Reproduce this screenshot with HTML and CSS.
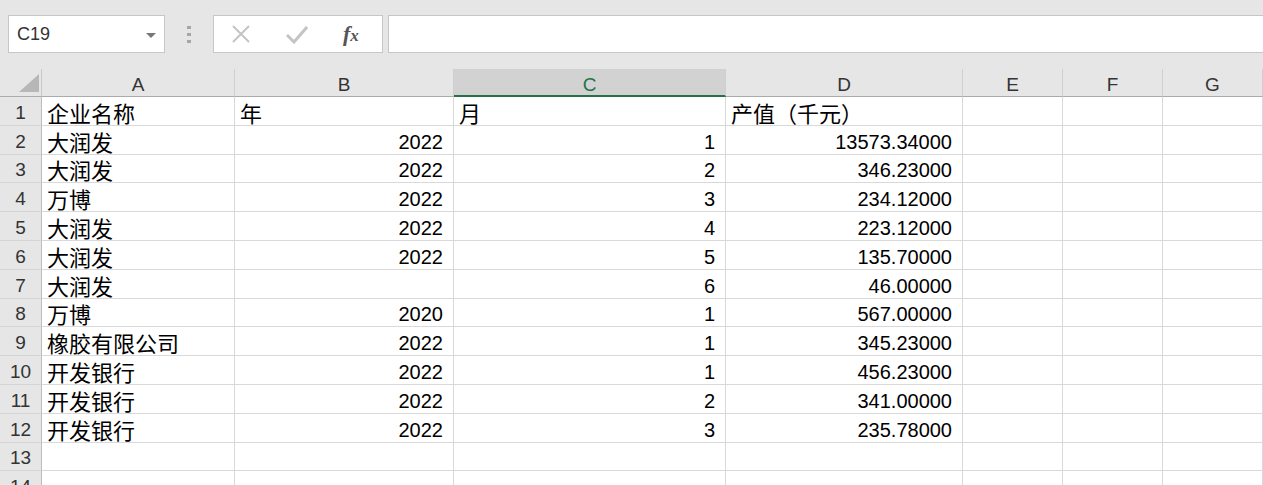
FILE: index.html
```html
<!DOCTYPE html>
<html lang="zh-CN">
<head>
  <meta charset="UTF-8" />
  <title>Sheet1</title>
  <link rel="stylesheet" href="styles.css">
</head>
<body>
  <!-- formula bar -->
  <div class="toolbar">
    <div class="name-box">
      <span>C19</span>
      <span class="caret"></span>
    </div>
    <div class="grip"><i></i><i></i><i></i></div>
    <div class="func-box">
      <svg class="icon" width="20" height="18" viewBox="0 0 20 18">
        <path d="M2 1 L18 17 M18 1 L2 17" stroke="#c4c4c4" stroke-width="2" fill="none"/>
      </svg>
      <svg class="icon" width="22" height="19" viewBox="0 0 22 19">
        <path d="M1 10 L8 17 L21 2" stroke="#c4c4c4" stroke-width="3" fill="none"/>
      </svg>
      <span class="fx">f<span>x</span></span>
    </div>
    <div class="formula-input"></div>
  </div>

  <!-- sheet grid -->
  <div class="sheet">
    <div class="corner"><span class="tri"></span></div>
    <div class="col-head">A</div>
    <div class="col-head">B</div>
    <div class="col-head active">C</div>
    <div class="col-head">D</div>
    <div class="col-head">E</div>
    <div class="col-head">F</div>
    <div class="col-head">G</div>

    <div class="row-head">1</div>
    <div class="cell txt">企业名称</div><div class="cell txt">年</div><div class="cell txt">月</div><div class="cell txt">产值（千元）</div><div class="cell"></div><div class="cell"></div><div class="cell"></div>

    <div class="row-head">2</div>
    <div class="cell txt">大润发</div><div class="cell num">2022</div><div class="cell num">1</div><div class="cell num">13573.34000</div><div class="cell"></div><div class="cell"></div><div class="cell"></div>

    <div class="row-head">3</div>
    <div class="cell txt">大润发</div><div class="cell num">2022</div><div class="cell num">2</div><div class="cell num">346.23000</div><div class="cell"></div><div class="cell"></div><div class="cell"></div>

    <div class="row-head">4</div>
    <div class="cell txt">万博</div><div class="cell num">2022</div><div class="cell num">3</div><div class="cell num">234.12000</div><div class="cell"></div><div class="cell"></div><div class="cell"></div>

    <div class="row-head">5</div>
    <div class="cell txt">大润发</div><div class="cell num">2022</div><div class="cell num">4</div><div class="cell num">223.12000</div><div class="cell"></div><div class="cell"></div><div class="cell"></div>

    <div class="row-head">6</div>
    <div class="cell txt">大润发</div><div class="cell num">2022</div><div class="cell num">5</div><div class="cell num">135.70000</div><div class="cell"></div><div class="cell"></div><div class="cell"></div>

    <div class="row-head">7</div>
    <div class="cell txt">大润发</div><div class="cell num"></div><div class="cell num">6</div><div class="cell num">46.00000</div><div class="cell"></div><div class="cell"></div><div class="cell"></div>

    <div class="row-head">8</div>
    <div class="cell txt">万博</div><div class="cell num">2020</div><div class="cell num">1</div><div class="cell num">567.00000</div><div class="cell"></div><div class="cell"></div><div class="cell"></div>

    <div class="row-head">9</div>
    <div class="cell txt">橡胶有限公司</div><div class="cell num">2022</div><div class="cell num">1</div><div class="cell num">345.23000</div><div class="cell"></div><div class="cell"></div><div class="cell"></div>

    <div class="row-head">10</div>
    <div class="cell txt">开发银行</div><div class="cell num">2022</div><div class="cell num">1</div><div class="cell num">456.23000</div><div class="cell"></div><div class="cell"></div><div class="cell"></div>

    <div class="row-head">11</div>
    <div class="cell txt">开发银行</div><div class="cell num">2022</div><div class="cell num">2</div><div class="cell num">341.00000</div><div class="cell"></div><div class="cell"></div><div class="cell"></div>

    <div class="row-head">12</div>
    <div class="cell txt">开发银行</div><div class="cell num">2022</div><div class="cell num">3</div><div class="cell num">235.78000</div><div class="cell"></div><div class="cell"></div><div class="cell"></div>

    <div class="row-head">13</div>
    <div class="cell"></div><div class="cell"></div><div class="cell"></div><div class="cell"></div><div class="cell"></div><div class="cell"></div><div class="cell"></div>

    <div class="row-head">14</div>
    <div class="cell"></div><div class="cell"></div><div class="cell"></div><div class="cell"></div><div class="cell"></div><div class="cell"></div><div class="cell"></div>
  </div>
</body>
</html>
```

FILE: styles.css
```css
html, body {
  margin: 0;
  height: 100%;
  overflow: hidden;
}
body {
  font-family: "Liberation Sans", Arial, "Noto Sans CJK SC", sans-serif;
  background-color: #e6e6e6;
  color: #000;
}
.toolbar {
  display: flex;
  align-items: stretch;
  height: 38px;
  padding: 15px 0 16px 8px;
}
.name-box {
  width: 157px;
  box-sizing: border-box;
  background-color: #fff;
  border: 1px solid #c6c6c6;
  display: flex;
  align-items: center;
  justify-content: space-between;
  padding: 0 8px 0 8px;
  font-size: 18px;
  color: #333;
}
.caret {
  width: 0;
  height: 0;
  border-left: 5px solid transparent;
  border-right: 5px solid transparent;
  border-top: 5px solid #777;
  margin-top: 2px;
}
.grip {
  width: 48px;
  display: flex;
  flex-direction: column;
  align-items: center;
  justify-content: center;
  gap: 4px;
}
.grip i {
  display: block;
  width: 4px;
  height: 3px;
  background-color: #a6a6a6;
}
.func-box {
  width: 170px;
  box-sizing: border-box;
  background-color: #fff;
  border: 1px solid #c6c6c6;
  display: flex;
  align-items: center;
  padding-left: 17px;
  gap: 35px;
}
.fx {
  font-family: "Liberation Serif", "Times New Roman", serif;
  font-style: italic;
  font-weight: bold;
  font-size: 22px;
  color: #555;
}
.fx span {
  font-size: 17px;
}
.formula-input {
  flex: 1;
  margin-left: 5px;
  margin-right: -2px;
  background-color: #fff;
  border: 1px solid #c6c6c6;
}
.sheet {
  display: grid;
  grid-template-columns: 42px 193px 219px 272px 237px 100px 100px 100px;
  grid-template-rows: 28px repeat(14, 28.8px);
  background-color: #fff;
}
.corner {
  background-color: #e6e6e6;
  border-right: 1px solid #c8c8c8;
  border-bottom: 1px solid #ababab;
  position: relative;
}
.tri {
  position: absolute;
  right: 2px;
  bottom: 4px;
  width: 0;
  height: 0;
  border-left: 20px solid transparent;
  border-bottom: 18px solid #b7b7b7;
}
.col-head {
  background-color: #e6e6e6;
  border-right: 1px solid #cfcfcf;
  border-bottom: 1px solid #ababab;
  display: flex;
  align-items: center;
  justify-content: center;
  font-size: 19px;
  color: #333;
  padding-top: 4px;
  box-sizing: border-box;
}
.col-head.active {
  background-color: #d2d2d2;
  border-bottom: 2px solid #217346;
  color: #217346;
  padding-top: 5px;
}
.row-head {
  background-color: #e6e6e6;
  border-right: 1px solid #bdbdbd;
  border-bottom: 1px solid #d4d4d4;
  display: flex;
  align-items: flex-end;
  justify-content: center;
  font-size: 19px;
  line-height: 22px;
  color: #333;
  padding-bottom: 1px;
  box-sizing: border-box;
}
.cell {
  border-right: 1px solid #d9d9d9;
  border-bottom: 1px solid #d9d9d9;
  display: flex;
  align-items: flex-end;
  box-sizing: border-box;
  white-space: nowrap;
}
.txt {
  font-family: "Noto Sans CJK SC", sans-serif;
  font-size: 22px;
  line-height: 24px;
  padding-left: 5px;
  padding-bottom: 1px;
}
.num {
  justify-content: flex-end;
  font-size: 20px;
  line-height: 22px;
  padding-right: 10px;
  padding-bottom: 1px;
}
```
